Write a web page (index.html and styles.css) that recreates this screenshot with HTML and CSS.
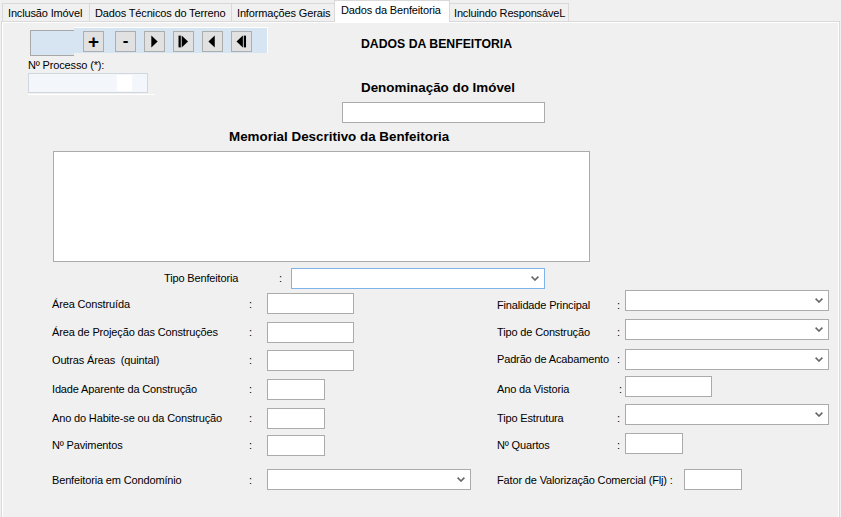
FILE: index.html
```html
<!DOCTYPE html>
<html lang="pt-BR">
<head>
<meta charset="utf-8">
<title>Dados da Benfeitoria</title>
<link rel="stylesheet" href="styles.css">
</head>
<body>
<div class="tabs">
  <div class="tab t1">Inclusão Imóvel</div>
  <div class="tab t2">Dados Técnicos do Terreno</div>
  <div class="tab t3">Informações Gerais</div>
  <div class="tab active">Dados da Benfeitoria</div>
  <div class="tab t5">Incluindo ResponsáveL</div>
</div>
<div class="panel">
  <div class="page">
    <div class="head">
      <div class="head-left">
        <div class="toolbar">
          <div class="tb-square"></div>
          <div class="tb-bar">
            <div class="btn plus">+</div>
            <div class="btn minus">-</div>
            <div class="btn"><svg width="21" height="19" viewBox="0 0 21 19"><polygon points="7,3 14,9.5 7,16" fill="#000"/></svg></div>
            <div class="btn"><svg width="21" height="19" viewBox="0 0 21 19"><rect x="5" y="3" width="2.5" height="13" fill="#000"/><polygon points="8.5,3 15.5,9.5 8.5,16" fill="#000"/></svg></div>
            <div class="btn"><svg width="21" height="19" viewBox="0 0 21 19"><polygon points="13,3 6,9.5 13,16" fill="#000"/></svg></div>
            <div class="btn"><svg width="21" height="19" viewBox="0 0 21 19"><polygon points="12,3 5,9.5 12,16" fill="#000"/><rect x="13" y="3" width="2.5" height="13" fill="#000"/></svg></div>
          </div>
        </div>
        <div class="proc-label">Nº Processo (*):</div>
        <div class="proc-input"><div class="proc-mark"></div></div>
        <div class="proc-line"></div>
      </div>
      <div class="head-right">
        <div class="title">DADOS DA BENFEITORIA</div>
        <div class="den-label">Denominação do Imóvel</div>
        <div class="inp den-input"></div>
      </div>
    </div>

    <div class="memo-label">Memorial Descritivo da Benfeitoria</div>
    <div class="memo"></div>

    <div class="tipo-row">
      <span class="lbl dy4">Tipo Benfeitoria</span>
      <span class="lbl dy4">:</span>
      <div class="sel focus tipo-sel"><svg width="8" height="5" viewBox="0 0 8 5"><path d="M0.6 0.6 L4 4 L7.4 0.6" stroke="#666" stroke-width="1.6" fill="none"/></svg></div>
    </div>

    <div class="cols">
      <div class="col-left">
        <div class="row">
          <span class="lbl dy5">Área Construída</span><span class="lbl dy5">:</span>
          <div class="inp w87"></div>
        </div>
        <div class="row g8">
          <span class="lbl dy4">Área de Projeção das Construções</span><span class="lbl dy4">:</span>
          <div class="inp w87"></div>
        </div>
        <div class="row g7">
          <span class="lbl dy4">Outras Áreas&nbsp; (quintal)</span><span class="lbl dy4">:</span>
          <div class="inp w87"></div>
        </div>
        <div class="row g8">
          <span class="lbl dy4">Idade Aparente da Construção</span><span class="lbl dy4">:</span>
          <div class="inp w58"></div>
        </div>
        <div class="row g8">
          <span class="lbl dy4">Ano do Habite-se ou da Construção</span><span class="lbl dy4">:</span>
          <div class="inp w58"></div>
        </div>
        <div class="row g6">
          <span class="lbl dy4">Nº Pavimentos</span><span class="lbl dy4">:</span>
          <div class="inp w58"></div>
        </div>
        <div class="row g13">
          <span class="lbl dy5">Benfeitoria em Condomínio</span><span class="lbl dy5">:</span>
          <div class="sel w204"><svg width="8" height="5" viewBox="0 0 8 5"><path d="M0.6 0.6 L4 4 L7.4 0.6" stroke="#666" stroke-width="1.6" fill="none"/></svg></div>
        </div>
      </div>

      <div class="col-right">
        <div class="rrow">
          <span class="lbl dy9">Finalidade Principal</span><span class="lbl dy9">:</span>
          <div class="sel w204"><svg width="8" height="5" viewBox="0 0 8 5"><path d="M0.6 0.6 L4 4 L7.4 0.6" stroke="#666" stroke-width="1.6" fill="none"/></svg></div>
        </div>
        <div class="rrow g8">
          <span class="lbl dy7">Tipo de Construção</span><span class="lbl dy7">:</span>
          <div class="sel w204"><svg width="8" height="5" viewBox="0 0 8 5"><path d="M0.6 0.6 L4 4 L7.4 0.6" stroke="#666" stroke-width="1.6" fill="none"/></svg></div>
        </div>
        <div class="rrow g9">
          <span class="lbl dy4">Padrão de Acabamento</span><span class="lbl dy4">:</span>
          <div class="sel w204"><svg width="8" height="5" viewBox="0 0 8 5"><path d="M0.6 0.6 L4 4 L7.4 0.6" stroke="#666" stroke-width="1.6" fill="none"/></svg></div>
        </div>
        <div class="rrow g6">
          <span class="lbl dy7">Ano da Vistoria</span><span class="lbl dy7 nudge">:</span>
          <div class="inp w87"></div>
        </div>
        <div class="rrow g7">
          <span class="lbl dy8">Tipo Estrutura</span><span class="lbl dy8">:</span>
          <div class="sel w204"><svg width="8" height="5" viewBox="0 0 8 5"><path d="M0.6 0.6 L4 4 L7.4 0.6" stroke="#666" stroke-width="1.6" fill="none"/></svg></div>
        </div>
        <div class="rrow g8">
          <span class="lbl dy6">Nº Quartos</span><span class="lbl dy6">:</span>
          <div class="inp w58"></div>
        </div>
        <div class="frow g15">
          <span class="lbl dy5">Fator de Valorização Comercial (Flj) :</span>
          <div class="inp w58"></div>
        </div>
      </div>
    </div>
  </div>
</div>
</body>
</html>
```

FILE: styles.css
```css
html, body {
  margin: 0;
  padding: 0;
}
body {
  width: 841px;
  height: 517px;
  overflow: hidden;
  background: #f0f0f0;
  font-family: "Liberation Sans", Arial, sans-serif;
  font-size: 11px;
  color: #000;
}

/* tabs */
.tabs {
  display: flex;
  align-items: flex-end;
  height: 21px;
  padding-left: 3px;
  position: relative;
  z-index: 2;
}
.tab {
  flex: none;
  height: 18px;
  box-sizing: border-box;
  margin-left: -1px;
  padding: 2px 0 0 5px;
  line-height: 14px;
  border: 1px solid #d9d9d9;
  border-bottom: 0;
  background: #f0f0f0;
  white-space: nowrap;
  overflow: hidden;
  letter-spacing: -0.15px;
}
.t1 { width: 88px; }
.t2 { width: 143px; }
.t3 { width: 105px; }
.t5 { width: 120px; padding-left: 4px; }
.tab.active {
  width: 116px;
  height: 22px;
  margin: 0 0 -1px -2px;
  padding: 3px 0 0 6px;
  line-height: 13px;
  background: #fff;
  position: relative;
  z-index: 3;
}

/* panel */
.panel {
  margin: 0 1px;
  border: 1px solid #d9d9d9;
  background: #fff;
  padding: 1px;
  height: 520px;
  box-sizing: border-box;
}
.page {
  background: #f0f0f0;
  height: 100%;
}

/* header */
.head {
  display: flex;
}
.head-left {
  width: 339px;
  padding-left: 25px;
  box-sizing: border-box;
}
.toolbar {
  display: flex;
  align-items: flex-start;
  margin: 4px 0 0 2px;
}
.tb-square {
  width: 44px;
  height: 26px;
  margin-top: 3px;
  box-sizing: border-box;
  background: #d7e4f2;
  border: 1px solid #a8a8a8;
  border-right: 0;
}
.tb-bar {
  width: 194px;
  height: 26px;
  box-sizing: border-box;
  background: #d7e4f2;
  border-top: 1px solid #fff;
  border-right: 1px solid #fff;
  display: flex;
  align-items: flex-start;
  padding: 3px 0 0 9px;
  gap: 8px;
}
.btn {
  width: 21px;
  height: 21px;
  box-sizing: border-box;
  border: 1px solid #adadad;
  background: #e1e1e1;
  display: flex;
  align-items: center;
  justify-content: center;
  font-weight: bold;
  line-height: 1;
}
.btn.plus {
  font-size: 19px;
}
.btn.minus {
  font-size: 17px;
  margin-left: 3px;
  padding-bottom: 2px;
}
.proc-label {
  margin-top: 3px;
  line-height: 13px;
  letter-spacing: -0.15px;
}
.proc-input {
  width: 120px;
  height: 20px;
  margin-top: 1px;
  box-sizing: border-box;
  border: 1px solid #d2d7de;
  background: #f3f6fa;
  display: flex;
  justify-content: flex-end;
  padding: 1px 15px 1px 0;
}
.proc-mark {
  width: 15px;
  background: #fff;
}
.proc-line {
  width: 127px;
  height: 1px;
  margin-top: 1px;
  background: #fff;
}

.head-right {
  padding-top: 14px;
}
.title {
  padding-left: 19px;
  font-size: 12.25px;
  line-height: 14px;
  font-weight: bold;
}
.den-label {
  padding-left: 19px;
  margin-top: 29px;
  font-size: 13.4px;
  line-height: 16px;
  font-weight: bold;
}
.inp {
  height: 21px;
  box-sizing: border-box;
  border: 1px solid #ababab;
  background: #fff;
}
.den-input {
  width: 203px;
  margin-top: 6px;
}

/* memo */
.memo-label {
  margin-top: 6px;
  padding-left: 226px;
  font-size: 13.4px;
  line-height: 16px;
  font-weight: bold;
}
.memo {
  margin: 6px 0 0 50px;
  width: 537px;
  height: 111px;
  box-sizing: border-box;
  border: 1px solid #ababab;
  background: #fff;
}

/* generic fields */
.lbl {
  line-height: 13px;
  letter-spacing: -0.15px;
  white-space: nowrap;
}
.sel {
  height: 21px;
  box-sizing: border-box;
  border: 1px solid #ababab;
  background: #fff;
  display: flex;
  align-items: center;
  justify-content: flex-end;
  padding: 0 5px 0 0;
}
.sel.focus {
  border-color: #7eb4ea;
}
.w87 { width: 87px; }
.w58 { width: 58px; }
.w204 { width: 204px; }

.dy4 { margin-top: 4px; }
.dy5 { margin-top: 5px; }
.dy6 { margin-top: 6px; }
.dy7 { margin-top: 7px; }
.dy8 { margin-top: 8px; }
.dy9 { margin-top: 9px; }
.nudge { padding-left: 2px; }

.g6 { margin-top: 6px; }
.g7 { margin-top: 7px; }
.g8 { margin-top: 8px; }
.g9 { margin-top: 9px; }
.g13 { margin-top: 13px; }
.g15 { margin-top: 15px; }

.tipo-row {
  display: grid;
  grid-template-columns: 115px 12px 254px;
  align-items: start;
  margin-top: 6px;
  padding-left: 161px;
}

.cols {
  display: flex;
  align-items: flex-start;
  margin-top: 1px;
  padding-left: 49px;
}
.col-left {
  width: 445px;
  padding-top: 3px;
}
.row {
  display: grid;
  grid-template-columns: 197px 18px auto;
  align-items: start;
  height: 21px;
}
.col-right {
  flex: 1;
}
.rrow {
  display: grid;
  grid-template-columns: 120px 8px auto;
  align-items: start;
  height: 21px;
}
.frow {
  display: grid;
  grid-template-columns: 187px auto;
  align-items: start;
  height: 21px;
}
```
